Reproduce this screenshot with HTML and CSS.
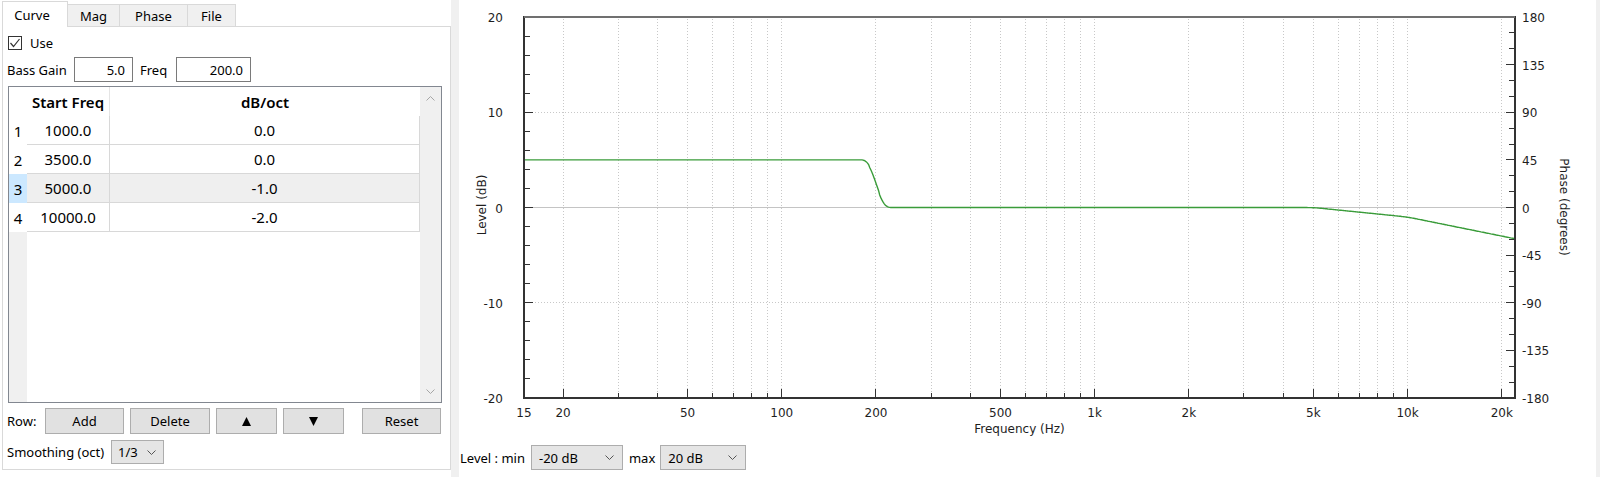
FILE: index.html
```html
<!DOCTYPE html>
<html lang="en-US">

<head>
    <meta charset="UTF-8">
    <meta name="viewport" content="width=device-width">

    <title>Target Curve</title>

    <link rel="stylesheet" href="styles.css">

</head>

<body>
    <div class="app">
        <div class="side">
            <div class="tabs">
                <div class="tab active">Curve</div>
                <div class="tab mag">Mag</div>
                <div class="tab phase">Phase</div>
                <div class="tab file">File</div>
            </div>
            <div class="pane">
                <div class="check">
                    <span class="box"><svg width="12" height="12" viewBox="0 0 12 12"><polyline points="1.5,6 4.5,9.5 10.5,2" /></svg></span>
                    <span>Use</span>
                </div>
                <div class="gain">
                    <span class="lbl-gain">Bass Gain</span>
                    <input class="num gain-val" type="text" value="5.0" readonly>
                    <span class="lbl-freq">Freq</span>
                    <input class="num freq-val" type="text" value="200.0" readonly>
                </div>
                <div class="table">
                    <div class="cells">
                        <div class="corner"></div>
                        <div class="th first">Start Freq</div>
                        <div class="th">dB/oct</div>
                        <div class="rh">1</div><div class="td">1000.0</div><div class="td">0.0</div>
                        <div class="rh">2</div><div class="td">3500.0</div><div class="td">0.0</div>
                        <div class="rh cur">3</div><div class="td sel">5000.0</div><div class="td sel">-1.0</div>
                        <div class="rh">4</div><div class="td">10000.0</div><div class="td">-2.0</div>
                        <div class="rh-fill"></div><div class="fill"></div>
                    </div>
                    <div class="vscroll">
                        <svg class="chev-s" width="9" height="5"><polyline points="0.5,4.5 4.5,0.5 8.5,4.5" /></svg>
                        <svg class="chev-s" width="9" height="5"><polyline points="0.5,0.5 4.5,4.5 8.5,0.5" /></svg>
                    </div>
                </div>
                <div class="btn-row">
                    <span class="lbl-row">Row:</span>
                    <div class="btn add">Add</div>
                    <div class="btn del">Delete</div>
                    <div class="btn arrow"><svg width="9" height="9"><polygon points="4.5,0 9,9 0,9" /></svg></div>
                    <div class="btn arrow"><svg width="9" height="9"><polygon points="0,0 9,0 4.5,9" /></svg></div>
                    <div class="btn reset">Reset</div>
                </div>
                <div class="smooth">
                    <span class="lbl-smooth">Smoothing (oct)</span>
                    <div class="combo small">
                        <span>1/3</span>
                        <svg class="chev" width="9" height="5"><polyline points="0.5,0.5 4.5,4.5 8.5,0.5" /></svg>
                    </div>
                </div>
            </div>
        </div>
        <div class="splitter"></div>
        <div class="chart-area">
            <svg id="chart" class="chart" width="1137" height="441"></svg>
            <div class="level-row">
                <span>Level : min</span>
                <div class="combo lvl-min">
                    <span>-20 dB</span>
                    <svg class="chev" width="9" height="5"><polyline points="0.5,0.5 4.5,4.5 8.5,0.5" /></svg>
                </div>
                <span class="lbl-max">max</span>
                <div class="combo lvl-max">
                    <span>20 dB</span>
                    <svg class="chev" width="9" height="5"><polyline points="0.5,0.5 4.5,4.5 8.5,0.5" /></svg>
                </div>
            </div>
        </div>
        <div class="edge"></div>
    </div>
    <script>
        "use strict";
        const NS = "http://www.w3.org/2000/svg";
        const chart = document.getElementById("chart");
        const L = 65, R = 1056, T = 17, B = 398;
        const FMIN = 15, FMAX = 22050;
        const perDecade = (R - L) / Math.log10(FMAX / FMIN);

        function fx(f) { return L + perDecade * Math.log10(f / FMIN); }
        function dbY(db) { return T + (20 - db) * (B - T) / 40; }
        function degY(d) { return T + (180 - d) * (B - T) / 360; }
        function px(v) { return Math.floor(v) + 0.5; }

        function add(tag, attrs, text) {
            let el = document.createElementNS(NS, tag);
            for (let k in attrs) el.setAttribute(k, attrs[k]);
            if (text !== undefined) el.textContent = text;
            chart.appendChild(el);
            return el;
        }
        function line(x1, y1, x2, y2, cls) {
            return add("line", { x1: x1, y1: y1, x2: x2, y2: y2, class: cls });
        }

        // target curve before smoothing
        function raw(f) {
            if (f < 200) return 5;
            if (f < 5000) return 0;
            if (f < 10000) return -Math.log2(f / 5000);
            return -1 - 2 * Math.log2(f / 10000);
        }
        // 1/3 octave smoothing, hann weighted
        function smooth(f) {
            let s = 0, w = 0, n = 61;
            for (let i = 0; i < n; i++) {
                let t = i / (n - 1) - 0.5;
                let k = 0.5 + 0.5 * Math.cos(2 * Math.PI * t);
                s += k * raw(f * Math.pow(2, t / 3));
                w += k;
            }
            return s / w;
        }

        let freqs = [];
        for (let dec = 10; dec <= 10000; dec *= 10) {
            for (let m = 1; m <= 9; m++) {
                let f = m * dec;
                if (f >= 20 && f <= 20000) freqs.push(f);
            }
        }
        const major = [20, 50, 100, 200, 500, 1000, 2000, 5000, 10000, 20000];
        const names = { 1000: "1k", 2000: "2k", 5000: "5k", 10000: "10k", 20000: "20k" };

        freqs.forEach(f => line(px(fx(f)), T + 2, px(fx(f)), B - 1, "grid"));
        [10, -10].forEach(db => line(L + 2, px(dbY(db)), R - 1, px(dbY(db)), "grid"));
        line(L + 1, px(dbY(0)), R - 1, px(dbY(0)), "zero");

        let pts = [];
        for (let i = 0; i <= 900; i++) {
            let f = FMIN * Math.pow(FMAX / FMIN, i / 900);
            pts.push(fx(f).toFixed(1) + "," + dbY(smooth(f)).toFixed(1));
        }
        add("polyline", { points: pts.join(" "), class: "curve" });

        add("rect", { x: L, y: T, width: R - L, height: B - T, class: "frame" });
        line(L, T, R, T, "frame-top");

        freqs.forEach(f => {
            let x = px(fx(f));
            line(x, B - 1, x, B - 1 - (major.includes(f) ? 8 : 4), "tick");
        });
        for (let db = -18; db <= 18; db += 2) {
            let y = px(dbY(db));
            line(L + 1, y, L + 1 + (db % 10 == 0 ? 8 : 5), y, "tick");
        }
        for (let d = -165; d <= 165; d += 15) {
            let y = px(degY(d));
            line(R - 1, y, R - 1 - (d % 45 == 0 ? 8 : 5), y, "tick");
        }

        [20, 10, 0, -10, -20].forEach(db => add("text", { x: L - 21, y: dbY(db) + 5, class: "lbl end" }, db));
        for (let d = 180; d >= -180; d -= 45) add("text", { x: R + 7, y: degY(d) + 5, class: "lbl" }, d);
        add("text", { x: L, y: 417, class: "lbl mid" }, "15");
        major.forEach(f => add("text", { x: fx(f), y: 417, class: "lbl mid" }, names[f] || f));

        add("text", { x: (L + R) / 2, y: 433, class: "lbl mid" }, "Frequency (Hz)");
        add("text", { transform: "translate(27,205) rotate(-90)", class: "lbl mid" }, "Level (dB)");
        add("text", { transform: "translate(1101,207) rotate(90)", class: "lbl mid" }, "Phase (degrees)");
    </script>
</body>

</html>
```

FILE: styles.css
```css
body {
    margin: 0;
    background-color: #fff;
    font-family: "Noto Sans", "Open Sans", sans-serif;
    font-size: 13px;
    color: #000;
}

.app {
    display: flex;
    height: 477px;
}

.side {
    width: 451px;
    padding-left: 2px;
    box-sizing: border-box;
}

.splitter {
    width: 8px;
    background-color: #f0f0f0;
}

.chart-area {
    width: 1137px;
}

.edge {
    flex: 1;
    background-color: #f0f0f0;
}

/* tabs */

.tabs {
    display: flex;
    align-items: flex-end;
    height: 26px;
}

.tab {
    box-sizing: border-box;
    height: 22px;
    border: 1px solid #d9d9d9;
    border-bottom: none;
    background-color: #f0f0f0;
    display: flex;
    align-items: center;
    justify-content: center;
    margin-left: -1px;
}

.tab.active {
    width: 66px;
    height: 26px;
    margin-left: 0;
    margin-bottom: -1px;
    padding-right: 6px;
    background-color: #fff;
    position: relative;
    z-index: 1;
}

.tab.mag {
    width: 53px;
}

.tab.phase {
    width: 69px;
}

.tab.file {
    width: 49px;
}

.pane {
    box-sizing: border-box;
    height: 444px;
    border: 1px solid #d9d9d9;
    padding: 9px 0 0 4px;
    display: flex;
    flex-direction: column;
    align-items: flex-start;
}

/* checkbox */

.check {
    display: flex;
    align-items: center;
    height: 14px;
    margin-left: 1px;
}

.box {
    box-sizing: border-box;
    width: 14px;
    height: 14px;
    border: 1px solid #333;
    margin-right: 8px;
    display: flex;
}

.box polyline {
    fill: none;
    stroke: #333;
    stroke-width: 1.2;
}

/* bass gain row */

.gain {
    display: flex;
    align-items: center;
    height: 25px;
    margin-top: 7px;
}

.lbl-gain {
    width: 67px;
}

.lbl-freq {
    width: 36px;
    margin-left: 7px;
}

.num {
    box-sizing: border-box;
    height: 25px;
    border: 1px solid #7a7a7a;
    padding: 0 7px;
    font-family: inherit;
    font-size: 13px;
    text-align: right;
    background-color: #fff;
    outline: 0;
}

.gain-val {
    width: 59px;
}

.freq-val {
    width: 75px;
}

/* table */

.table {
    box-sizing: border-box;
    display: flex;
    width: 434px;
    height: 317px;
    margin-top: 4px;
    margin-left: 1px;
    border: 1px solid #828790;
    font-size: 15px;
}

.cells {
    display: grid;
    grid-template-columns: 18px 83px 310px;
    grid-template-rows: repeat(5, 29px) 1fr;
}

.th,
.td,
.rh {
    box-sizing: border-box;
    display: flex;
    align-items: center;
    justify-content: center;
}

.th {
    font-weight: 600;
}

.th.first {
    border-right: 1px solid #e5e5e5;
}

.td {
    border-right: 1px solid #d8d8d8;
    border-bottom: 1px solid #d8d8d8;
}

.td.sel {
    background-color: #efefef;
}

.rh.cur {
    background-color: #cce8ff;
}

.rh-fill {
    background-color: #f0f0f0;
}

.fill {
    grid-column: span 2;
}

.vscroll {
    width: 21px;
    box-sizing: border-box;
    padding: 9px 0 8px;
    background-color: #f0f0f0;
    display: flex;
    flex-direction: column;
    justify-content: space-between;
    align-items: center;
}

.chev-s polyline {
    fill: none;
    stroke: #a6a6a6;
}

/* buttons */

.btn-row {
    display: flex;
    align-items: center;
    height: 26px;
    margin-top: 5px;
}

.lbl-row {
    width: 38px;
}

.btn {
    box-sizing: border-box;
    height: 26px;
    border: 1px solid #adadad;
    background-color: #e1e1e1;
    display: flex;
    align-items: center;
    justify-content: center;
    margin-right: 6px;
}

.btn.add {
    width: 79px;
}

.btn.del {
    width: 80px;
}

.btn.arrow {
    width: 61px;
}

.btn.arrow + .btn.arrow {
    margin-right: 18px;
}

.btn.reset {
    width: 79px;
    margin-right: 0;
}

.btn polygon {
    fill: #000;
}

/* combos */

.smooth {
    display: flex;
    align-items: center;
    height: 24px;
    margin-top: 6px;
}

.lbl-smooth {
    width: 104px;
}

.combo {
    box-sizing: border-box;
    height: 25px;
    border: 1px solid #adadad;
    background-color: #e5e5e5;
    display: flex;
    align-items: center;
    justify-content: space-between;
    padding: 0 8px 0 7px;
}

.combo.small {
    width: 53px;
    height: 24px;
    padding: 0 7px 0 6px;
}

.chev polyline {
    fill: none;
    stroke: #555;
}

.level-row {
    display: flex;
    align-items: center;
    padding-top: 4px;
    padding-left: 1px;
}

.lvl-min {
    width: 92px;
    margin-left: 6px;
}

.lbl-max {
    margin-left: 6px;
}

.lvl-max {
    width: 86px;
    margin-left: 5px;
}

/* chart */

.chart {
    display: block;
}

.grid {
    stroke: #c8c8c8;
    stroke-dasharray: 1 2;
}

.zero {
    stroke: #c4c4c4;
}

.curve {
    fill: none;
    stroke: #3a9c3a;
    stroke-width: 1.4;
}

.frame {
    fill: none;
    stroke: #333;
    stroke-width: 2;
}

.frame-top {
    stroke: #707070;
    stroke-width: 2;
}

.tick {
    stroke: #333;
}

.lbl {
    font-family: "DejaVu Sans", sans-serif;
    font-size: 12px;
    fill: #1e1e1e;
}

.lbl.end {
    text-anchor: end;
}

.lbl.mid {
    text-anchor: middle;
}
```
